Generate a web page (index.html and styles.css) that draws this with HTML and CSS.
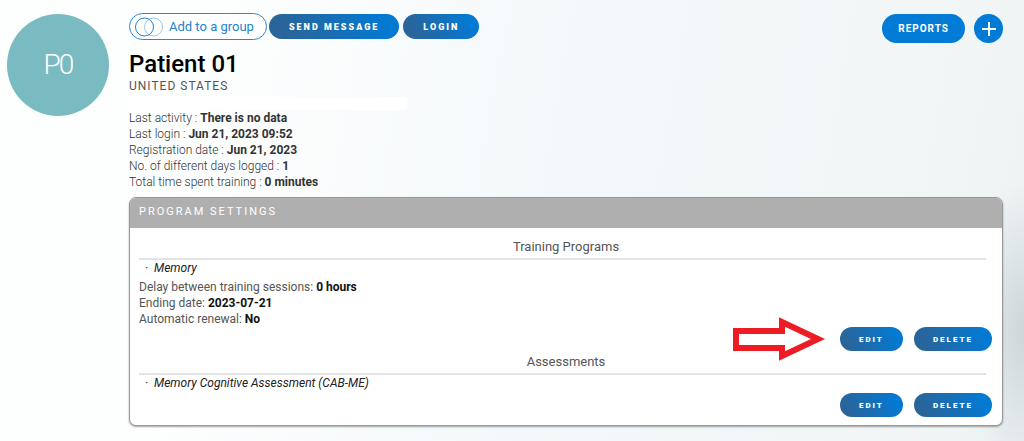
FILE: index.html
```html
<!DOCTYPE html>
<html lang="en">
	<head>
		<meta charset="UTF-8">
		<title>Patient 01</title>
		<link rel="stylesheet" href="styles.css">
	</head>
	<body>
		<div class="page">
			<div class="avatar">P0</div>
			<main class="content">
				<div class="toolbar">
					<div class="group-btns">
						<button type="button" class="btn-group">
							<svg width="28" height="20" viewBox="0 0 28 20" fill="none" stroke="#1c80d0">
								<circle cx="18.5" cy="10" r="9" opacity="0.45"/>
								<circle cx="9.5" cy="10" r="9"/>
							</svg>
							Add to a group
						</button>
						<button type="button" class="btn">Send message</button>
						<button type="button" class="btn">Login</button>
					</div>
					<div class="right-btns">
						<button type="button" class="btn-reports">Reports</button>
						<button type="button" class="btn-add" aria-label="Add">
							<svg width="14" height="14" viewBox="0 0 14 14" stroke="#fff" stroke-width="2">
								<path d="M7 0V14M0 7H14"/>
							</svg>
						</button>
					</div>
				</div>
				<h1>Patient 01</h1>
				<p class="country">United States</p>
				<div class="email"></div>
				<ul class="stats">
					<li>Last activity : <b>There is no data</b></li>
					<li>Last login : <b>Jun 21, 2023 09:52</b></li>
					<li>Registration date : <b>Jun 21, 2023</b></li>
					<li>No. of different days logged : <b>1</b></li>
					<li>Total time spent training : <b>0 minutes</b></li>
				</ul>
				<section class="card">
					<h2>Program settings</h2>
					<div class="card-body">
						<h3>Training Programs</h3>
						<p class="program">Memory</p>
						<ul class="details">
							<li>Delay between training sessions: <b>0 hours</b></li>
							<li>Ending date: <b>2023-07-21</b></li>
							<li>Automatic renewal: <b>No</b></li>
						</ul>
						<div class="actions">
							<svg class="arrow" width="92" height="44" viewBox="0 0 92 44">
								<path d="M3 14H49V5L85 22L49 39V31H3Z" fill="#fff" stroke="#ed1c24" stroke-width="6"/>
							</svg>
							<button type="button" class="btn btn-sm">Edit</button>
							<button type="button" class="btn btn-sm">Delete</button>
						</div>
						<h3>Assessments</h3>
						<p class="program">Memory Cognitive Assessment (CAB-ME)</p>
						<div class="actions">
							<button type="button" class="btn btn-sm">Edit</button>
							<button type="button" class="btn btn-sm">Delete</button>
						</div>
					</div>
				</section>
			</main>
		</div>
	</body>
</html>
```
FILE: styles.css
```css
* {margin:0; padding:0; box-sizing:border-box;}
li{list-style:none;}
body{font-family:Roboto, "Liberation Sans", sans-serif; font-size:12px; color:#555; background:radial-gradient(ellipse 60px 150px at 100% 75%, rgba(190,203,204,0.7), rgba(190,203,204,0)), linear-gradient(100deg, #fdfefe 20%, #f4f8fa 55%, #f2f6f7 85%, #edf2f3); min-height:100vh;}
button{font-family:inherit; border:0; cursor:pointer; white-space:nowrap;}
b{font-weight:700; color:#333;}
.page{display:flex; gap:20px; padding:13px 21px 14px 7px;}
.avatar{flex:none; width:102px; height:102px; margin-top:1px; border-radius:50%; background:#7abbc2; color:#fff; font-size:28px; font-weight:300; letter-spacing:-2px; line-height:102px; text-align:center;}
.content{flex:1; min-width:0;}
.toolbar{display:flex; justify-content:space-between; align-items:flex-start;}
.group-btns{display:flex; align-items:center; gap:4px;}
.right-btns{display:flex; gap:9px; padding-top:1px;}
.btn{height:25px; padding:0 20px; border-radius:13px; background:linear-gradient(60deg, #29659a 15%, #0479d2 85%); color:#fff; font-size:9px; font-weight:900; letter-spacing:2px; text-transform:uppercase;}
.btn-group{display:flex; align-items:center; gap:6px; height:27px; margin-right:-2px; padding:0 12px 0 5px; border:1px solid #2b87d1; border-radius:14px; background:#fff; color:#2382d0; font-size:13px;}
.btn-reports{height:29px; padding:0 16px; border-radius:15px; background:#017bd6; color:#fff; font-size:10px; font-weight:700; letter-spacing:1px; text-transform:uppercase;}
.btn-add{display:flex; align-items:center; justify-content:center; width:29px; height:29px; border-radius:50%; background:#017bd6;}
h1{margin-top:6px; font-size:24px; line-height:30px; font-weight:500; color:#000;}
.country{font-size:12px; line-height:14px; letter-spacing:1px; text-transform:uppercase;}
.email{width:278px; height:13px; margin-top:4px; border-radius:4px; background:#fff;}
.stats li{line-height:16px; font-weight:300; color:#333;}
.card{margin-top:7px; border:1px solid #999; border-radius:7px; background:#fff; box-shadow:0 1px 2px rgba(0,0,0,0.35); overflow:hidden;}
h2{height:30px; padding-left:9px; background:#afafaf; color:#fff; font-size:11px; line-height:28px; font-weight:400; letter-spacing:2px; text-transform:uppercase;}
.card-body{padding:10px 10px 8px 9px;}
h3{margin-right:6px; padding:0 0 2px 7px; border-bottom:2px solid #e4e4e4; font-size:13px; line-height:18px; font-weight:400; text-align:center;}
.program{padding-left:6px; line-height:16px; font-style:italic; color:#222;}
.program::before{content:"·"; display:inline-block; width:9px;}
.details{padding-top:3px;}
.details li{line-height:16px;}
.details b{color:#111;}
.actions{position:relative; display:flex; justify-content:flex-end; gap:11px;}
.details + .actions{margin-bottom:2px;}
.program + .actions{padding-top:2px;}
.btn-sm{height:24px; padding:0 19px; font-size:8px;}
/* pointer to the edit button */
.arrow{position:absolute; right:167px; top:-10px;}
```
